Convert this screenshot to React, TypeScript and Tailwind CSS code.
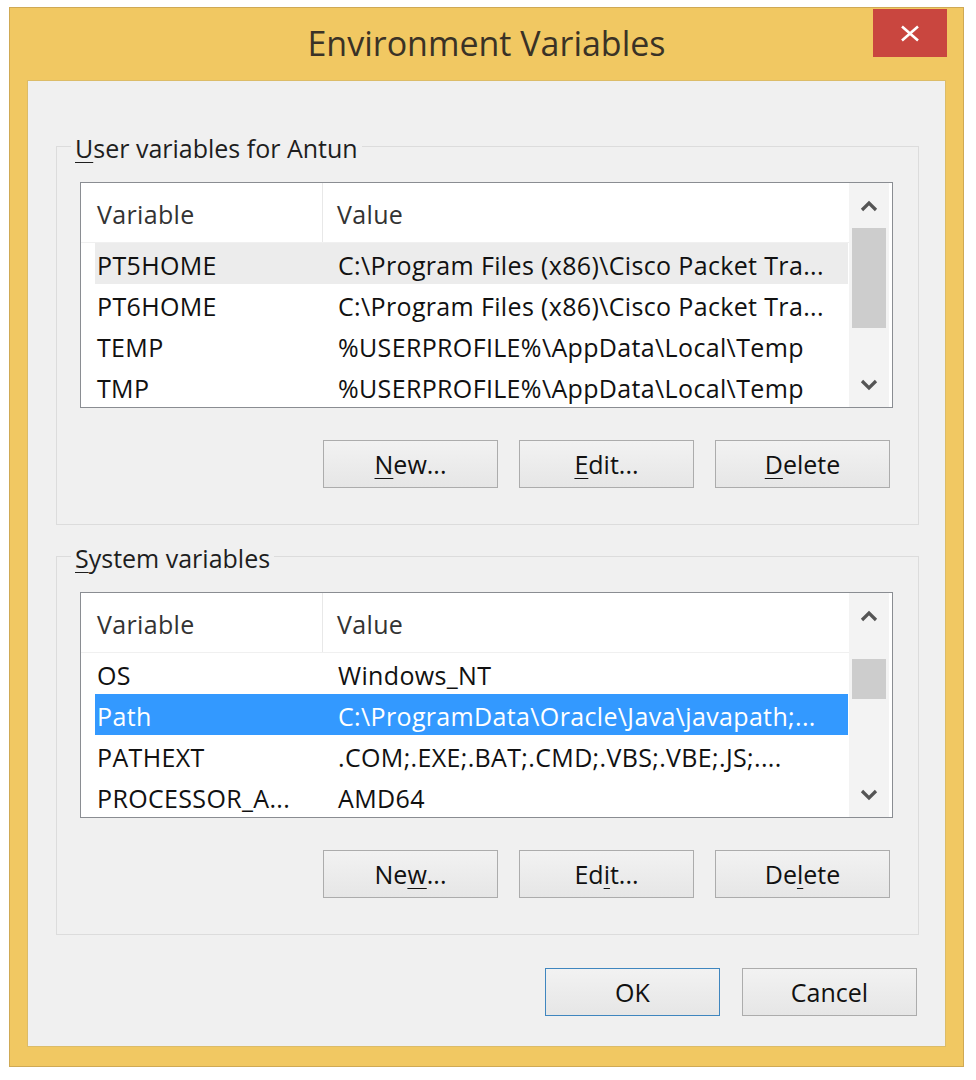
import type { ReactNode } from 'react';

type Row = { name: string; value: string; state?: 'hover' | 'selected' };

const userRows: Row[] = [
  { name: 'PT5HOME', value: 'C:\\Program Files (x86)\\Cisco Packet Tra...', state: 'hover' },
  { name: 'PT6HOME', value: 'C:\\Program Files (x86)\\Cisco Packet Tra...' },
  { name: 'TEMP', value: '%USERPROFILE%\\AppData\\Local\\Temp' },
  { name: 'TMP', value: '%USERPROFILE%\\AppData\\Local\\Temp' },
];

const systemRows: Row[] = [
  { name: 'OS', value: 'Windows_NT' },
  { name: 'Path', value: 'C:\\ProgramData\\Oracle\\Java\\javapath;...', state: 'selected' },
  { name: 'PATHEXT', value: '.COM;.EXE;.BAT;.CMD;.VBS;.VBE;.JS;....' },
  { name: 'PROCESSOR_A...', value: 'AMD64' },
];

// access key underline
function Key({ children }: { children: ReactNode }) {
  return <span className="underline decoration-1 underline-offset-[4px]">{children}</span>;
}

function Chevron({ up }: { up?: boolean }) {
  return (
    <svg width="18" height="12" viewBox="0 0 18 12" className="text-[#555]">
      <path
        d={up ? 'M2 10 9 3 16 10' : 'M2 2 9 9 16 2'}
        fill="none"
        stroke="currentColor"
        strokeWidth="3.2"
      />
    </svg>
  );
}

function ScrollBar({ thumb }: { thumb: string }) {
  return (
    <div className="flex w-[40px] flex-col bg-[#f3f3f3]">
      <div className="flex h-[45px] items-center justify-center">
        <Chevron up />
      </div>
      <div className="flex-1 px-[3px]">
        <div className={`bg-[#cdcdcd] ${thumb}`} />
      </div>
      <div className="flex h-[45px] items-center justify-center">
        <Chevron />
      </div>
    </div>
  );
}

function VarList({ rows, thumb }: { rows: Row[]; thumb: string }) {
  return (
    <div className="flex h-[226px] border border-[#8a8d92] bg-white pr-[3px] tracking-[0.35px]">
      <div className="flex-1 overflow-hidden">
        <div className="flex h-[60px] items-center border-b border-[#f0f0f0] text-[#333]">
          <div className="flex h-full w-[242px] items-center border-r border-[#e8e8e8] pl-[16px] pt-[4px]">
            Variable
          </div>
          <div className="pl-[14px] pt-[4px]">Value</div>
        </div>
        {rows.map((row) => (
          <div
            key={row.name}
            className={`ml-[14px] mr-[1px] flex h-[41px] items-center pt-[5px] ${
              row.state === 'selected'
                ? 'bg-[#3399ff] text-white'
                : row.state === 'hover'
                  ? 'bg-[#ececec] text-[#111]'
                  : 'text-[#111]'
            }`}
          >
            <div className="w-[228px] shrink-0 pl-[2px] whitespace-nowrap">{row.name}</div>
            <div className="pl-[15px] whitespace-nowrap">{row.value}</div>
          </div>
        ))}
      </div>
      <ScrollBar thumb={thumb} />
    </div>
  );
}

function Button({ children, primary }: { children: ReactNode; primary?: boolean }) {
  return (
    <button
      type="button"
      className={`flex h-[48px] w-[175px] items-center justify-center border bg-gradient-to-b from-[#f2f2f2] to-[#e6e6e6] pt-[2px] text-[#111] ${
        primary ? 'border-[#3f86bf]' : 'border-[#acacac]'
      }`}
    >
      {children}
    </button>
  );
}

function Group({ title, children }: { title: ReactNode; children: ReactNode }) {
  return (
    <div className="border border-[#dcdcdc] pr-[25px] pb-[36px] pl-[23px]">
      <div className="-mt-[14px] -ml-[9px] w-fit bg-[#f0f0f0] px-[4px] leading-[30px] text-[#1e1e1e]">
        {title}
      </div>
      <div className="mt-[19px]">{children}</div>
    </div>
  );
}

export default function App() {
  return (
    <div className="min-h-screen bg-white pt-[7px] pl-[9px] font-['Open_Sans','Liberation_Sans',sans-serif] text-[25px]">
      <div className="flex h-[1060px] w-[955px] flex-col border border-[#cfa954] bg-[#f1c862]">
        {/* title bar */}
        <div className="relative flex h-[72px] items-center justify-center pb-[2px]">
          <span className="text-[34px] text-[#3a3226]">Environment Variables</span>
          <button
            type="button"
            className="absolute top-[1px] right-[16px] flex h-[48px] w-[74px] items-center justify-center bg-[#c9463f]"
          >
            <svg width="20" height="17" viewBox="0 0 20 17">
              <path d="M2 1.5 18 15.5M18 1.5 2 15.5" stroke="#fff" strokeWidth="2.6" fill="none" />
            </svg>
          </button>
        </div>

        {/* client area */}
        <div className="mx-[17px] mb-[19px] flex-1 border border-[#dcbc68] bg-[#f0f0f0] pt-[65px] pr-[26px] pl-[28px]">
          <Group
            title={
              <>
                <Key>U</Key>ser variables for Antun
              </>
            }
          >
            <VarList rows={userRows} thumb="h-[100px]" />
            <div className="mt-[32px] mr-[3px] flex justify-end gap-[21px]">
              <Button>
                <Key>N</Key>ew...
              </Button>
              <Button>
                <Key>E</Key>dit...
              </Button>
              <Button>
                <Key>D</Key>elete
              </Button>
            </div>
          </Group>

          <div className="mt-[31px]">
            <Group
              title={
                <>
                  <Key>S</Key>ystem variables
                </>
              }
            >
              <VarList rows={systemRows} thumb="mt-[21px] h-[40px]" />
              <div className="mt-[32px] mr-[3px] flex justify-end gap-[21px]">
                <Button>
                  Ne<Key>w</Key>...
                </Button>
                <Button>
                  Ed<Key>i</Key>t...
                </Button>
                <Button>
                  De<Key>l</Key>ete
                </Button>
              </div>
            </Group>
          </div>

          <div className="mt-[33px] mr-[2px] flex justify-end gap-[22px]">
            <Button primary>OK</Button>
            <Button>Cancel</Button>
          </div>
        </div>
      </div>
    </div>
  );
}
